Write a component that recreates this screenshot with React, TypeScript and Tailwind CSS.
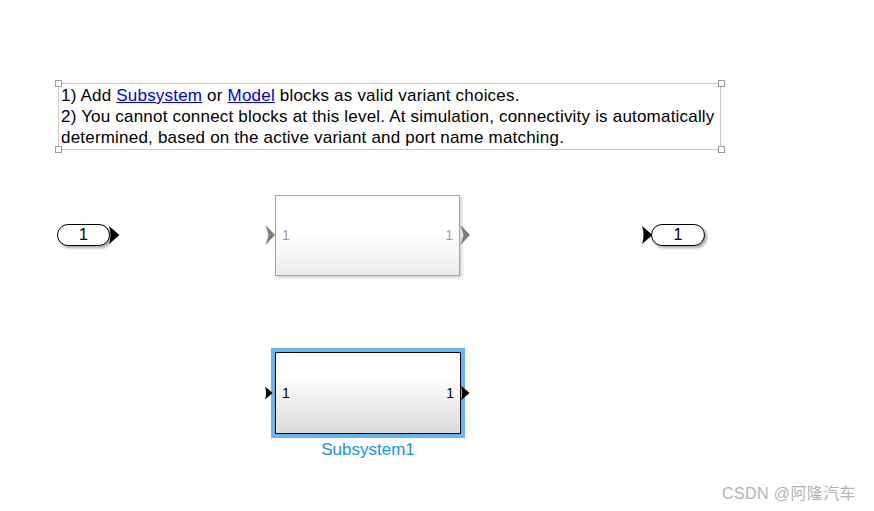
import React from "react";

const font = { fontFamily: '"Liberation Sans", Arial, sans-serif' };

function Handle({ x, y }: { x: number; y: number }) {
  return (
    <div
      className="absolute w-[7px] h-[7px] bg-white border border-[#9a9a9a]"
      style={{ left: x - 3, top: y - 3 }}
    />
  );
}

// filled right-pointing port arrow (Simulink style, slightly concave back)
function PortArrow({ className = "" }: { className?: string }) {
  return (
    <svg width="11" height="20" viewBox="0 0 11 20" className={className}>
      <path d="M0 1 L10.5 10 L0 19 Q3 10 0 1 Z" fill="#000" />
    </svg>
  );
}

function Chevron({ className = "" }: { className?: string }) {
  return (
    <svg width="11" height="22" viewBox="0 0 11 22" className={className}>
      <path d="M0.5 1 L10 11 L0.5 21 L3.5 11 Z" fill="#7d7d7d" />
    </svg>
  );
}

export default function App() {
  return (
    <div className="relative w-[874px] h-[511px] bg-white overflow-hidden" style={font}>
      {/* annotation */}
      <div className="absolute left-[58px] top-[83px] w-[663px] h-[67px] border border-[#c9c9c9] pl-[2px] pt-[1px] text-[17px] tracking-[0.2px] leading-[21px] text-black whitespace-nowrap">
        <div>
          1) Add <span className="text-[#0000ee] underline">Subsystem</span> or{" "}
          <span className="text-[#0000ee] underline">Model</span> blocks as valid variant choices.
        </div>
        <div>2) You cannot connect blocks at this level. At simulation, connectivity is automatically</div>
        <div>determined, based on the active variant and port name matching.</div>
      </div>
      <Handle x={58} y={83} />
      <Handle x={721} y={83} />
      <Handle x={58} y={149} />
      <Handle x={721} y={149} />

      {/* inport */}
      <div className="absolute left-[57px] top-[224px] w-[53px] h-[22px] rounded-full border-[1.5px] border-black bg-white shadow-[2px_2px_3px_rgba(0,0,0,0.35)] flex items-center justify-center text-[16px] text-black">
        1
      </div>
      <PortArrow className="absolute left-[109px] top-[225px]" />

      {/* inactive variant subsystem */}
      <div className="absolute left-[275px] top-[195px] w-[185px] h-[81px] border border-[#a3a3a3] bg-gradient-to-b from-white from-45% to-[#ececec] shadow-[2px_2px_3px_rgba(0,0,0,0.18)] flex items-center justify-between px-[6px] text-[14px] text-[#a0a0a0]">
        <span>1</span>
        <span>1</span>
      </div>
      <Chevron className="absolute left-[265px] top-[224px]" />
      <Chevron className="absolute left-[460px] top-[224px]" />

      {/* outport */}
      <PortArrow className="absolute left-[642px] top-[225px]" />
      <div className="absolute left-[651px] top-[224px] w-[54px] h-[22px] rounded-full border-[1.5px] border-black bg-white shadow-[2px_2px_3px_rgba(0,0,0,0.35)] flex items-center justify-center text-[16px] text-black">
        1
      </div>

      {/* selected Subsystem1 */}
      <div className="absolute left-[271px] top-[348px] w-[194px] h-[90px] bg-[#63b6f1] p-[4px]">
        <div className="w-full h-full border-[1.5px] border-black bg-gradient-to-b from-white from-30% to-[#dadada] flex items-center justify-between px-[6px] text-[14px] text-black">
          <span>1</span>
          <span>1</span>
        </div>
      </div>
      <PortArrow className="absolute left-[265px] top-[383px] w-[8px]" />
      <PortArrow className="absolute left-[461px] top-[384px] w-[9px] h-[18px]" />
      <div className="absolute left-[271px] top-[437px] w-[194px] text-center text-[17px] text-[#1a90f0]">
        Subsystem1
      </div>

      {/* watermark */}
      <div
        className="absolute left-[722px] top-[482px] text-[16px] tracking-[0.4px] text-[#b4b4b4] whitespace-nowrap"
        style={{ fontFamily: '"Liberation Sans", "Noto Sans CJK SC", sans-serif' }}
      >
        CSDN @阿隆汽车
      </div>
    </div>
  );
}
